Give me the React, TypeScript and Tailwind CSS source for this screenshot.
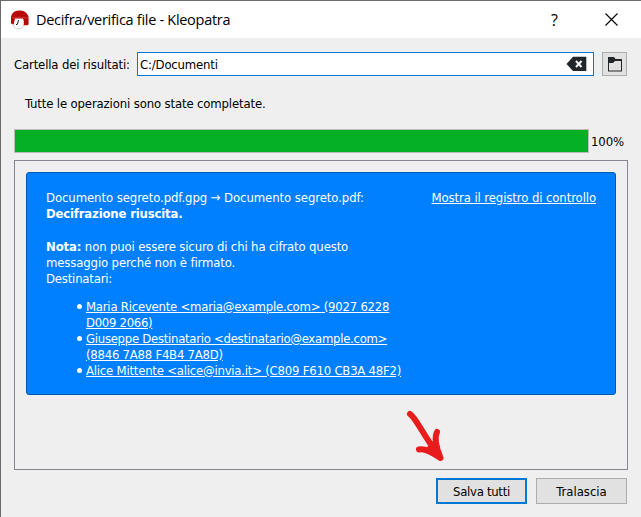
import type { ReactNode } from 'react';

function Row({ children, className = '' }: { children: ReactNode; className?: string }) {
  return (
    <div className={`h-4 whitespace-nowrap leading-4 ${className}`}>
      <span>{children}</span>
    </div>
  );
}

function KleopatraIcon() {
  return (
    <svg width="20" height="20" viewBox="0 0 20 20" className="shrink-0">
      <path d="M2.500 8H14v7c-1 3-3 4-5.500 4S4 17.500 3 15.500z" fill="#fafafa" stroke="#c4c4c4" strokeWidth=".7" />
      <path d="M1 13.500V7C2 2.500 5 .5 9.500.5S17 2.500 18.600 7v7.500l-1.300.8h-3.600c.5-2.600.3-5-.7-6.800H5L3.500 14.500z" fill="#b80808" />
      <path d="M2 8Q9 6.300 18 8" stroke="#dc5353" strokeWidth=".6" fill="none" />
      <path d="M8.500 10l-1 4M6 14.500h1.500" stroke="#222" strokeWidth="1" fill="none" />
    </svg>
  );
}

function TitleBar() {
  return (
    <header className="flex h-[37px] shrink-0 items-center bg-white pl-[9px] pr-[23px] text-black [font-stretch:normal]">
      <KleopatraIcon />
      <h1 className="ml-[6px] whitespace-nowrap font-['Open_Sans','Noto_Sans',sans-serif] text-[14.5px] tracking-[-0.29px]">
        Decifra/verifica file - Kleopatra
      </h1>
      <span className="ml-auto mr-[47px] font-['Open_Sans','Noto_Sans',sans-serif] text-[16px]">?</span>
      <svg width="13" height="13" viewBox="0 0 13 13" className="shrink-0">
        <path d="M.5.5l12 12M12.500.5l-12 12" stroke="#000" strokeWidth="1.100" />
      </svg>
    </header>
  );
}

function FolderField() {
  return (
    <div className="flex h-6 items-stretch">
      <label className="w-[123px] whitespace-nowrap leading-[26px] tracking-[-0.15px]">
        <span>Cartella dei risultati:</span>
      </label>
      <div className="flex w-[457px] items-center justify-between border border-[#0078d7] bg-white pl-[2px] pr-[6px] tracking-[-0.17px]">
        <span className="pt-[2px]">C:/Documenti</span>
        <svg width="21" height="16" viewBox="0 0 21 16">
          <path d="M.5 8L7 .8H20.300V15H7z" fill="#232629" />
          <path d="M10 5l5.500 6M15.500 5l-5.500 6" stroke="#fff" strokeWidth="2" />
        </svg>
      </div>
      <button className="ml-2 flex w-[25px] items-center justify-center border border-[#adadad] bg-[#e1e1e1]">
        <svg width="16" height="16" viewBox="0 0 16 16">
          <path d="M1 15.500V1h6l1.500 2H15v12.500z" fill="#232629" />
          <path d="M2 14.500V7h4l2-2h6v9.500z" fill="#e1e1e1" />
        </svg>
      </button>
    </div>
  );
}

function ResultCard() {
  return (
    <section className="flex h-[223px] w-[590px] justify-between rounded-[3px] border border-[#0059b3] bg-[#0080ff] pl-[19px] pr-[19px] pt-[17px] text-white">
      <div>
        <Row className="tracking-[-0.08px]">Documento segreto.pdf.gpg → Documento segreto.pdf:</Row>
        <Row className="font-bold tracking-[-0.18px]">Decifrazione riuscita.</Row>
        <Row className="mt-[17px] tracking-[-0.14px]">
          <b>Nota:</b> non puoi essere sicuro di chi ha cifrato questo
        </Row>
        <Row className="tracking-[-0.13px]">messaggio perché non è firmato.</Row>
        <Row className="tracking-[-0.2px]">Destinatari:</Row>
        <ul className="mt-3 pl-10 underline underline-offset-1">
          <li className="relative before:absolute before:-left-[9px] before:top-[5px] before:size-[5px] before:rounded-full before:bg-white">
            <Row className="tracking-[-0.23px]">Maria Ricevente &lt;maria@example.com&gt; (9027 6228</Row>
            <Row className="tracking-[-0.3px]">D009 2066)</Row>
          </li>
          <li className="relative before:absolute before:-left-[9px] before:top-[5px] before:size-[5px] before:rounded-full before:bg-white">
            <Row className="tracking-[-0.28px]">Giuseppe Destinatario &lt;destinatario@example.com&gt;</Row>
            <Row className="tracking-[-0.24px]">(8846 7A88 F4B4 7A8D)</Row>
          </li>
          <li className="relative before:absolute before:-left-[9px] before:top-[5px] before:size-[5px] before:rounded-full before:bg-white">
            <Row className="tracking-[-0.22px]">Alice Mittente &lt;alice@invia.it&gt; (C809 F610 CB3A 48F2)</Row>
          </li>
        </ul>
      </div>
      <Row className="tracking-[-0.1px] underline underline-offset-1">Mostra il registro di controllo</Row>
    </section>
  );
}

export default function App() {
  return (
    <div className="relative flex h-[517px] w-[641px] flex-col overflow-hidden border-l border-t border-[#6b6b6b] bg-[#efefef] font-['DejaVu_Sans_Condensed','DejaVu_Sans',sans-serif] text-[13px] text-black [font-stretch:condensed]">
      <TitleBar />
      <main className="flex flex-col pl-[13px] pt-[14px]">
        <FolderField />
        <div className="mt-5 h-4 pl-[11px] leading-4 tracking-[-0.14px]">
          <span>Tutte le operazioni sono state completate.</span>
        </div>
        <div className="mt-[17px] flex h-6 items-center">
          <div className="h-6 w-[575px] border border-[#bcbcbc] bg-[#06b025]" />
          <span className="ml-[2px] pt-[2px] tracking-[-0.1px]">100%</span>
        </div>
        <div className="mt-[7px] h-[310px] w-[614px] border border-[#828790] pl-[11px] pt-[11px]">
          <ResultCard />
        </div>
        <footer className="mt-2 flex w-[613px] justify-end gap-[9px]">
          <button className="h-[26px] w-[91px] border-2 border-[#0078d7] bg-[#e1e1e1] pt-px tracking-[-0.3px]">
            <span>Salva tutti</span>
          </button>
          <button className="h-[26px] w-[91px] border border-[#adadad] bg-[#e1e1e1] pt-px">
            <span>Tralascia</span>
          </button>
        </footer>
      </main>
      <svg className="absolute left-[404px] top-[408px]" width="42" height="56" viewBox="0 0 42 56" fill="none" stroke="#e81c1c" strokeWidth="6" strokeLinecap="round" strokeLinejoin="round">
        <path d="M5 5C11 9 17 24 32 44M32 23C29 29 31 38 35.500 49C28 44 20 39 14 40.500" />
        <path d="M29 34L35 49L22 41z" fill="#e81c1c" strokeWidth="4" />
      </svg>
    </div>
  );
}
